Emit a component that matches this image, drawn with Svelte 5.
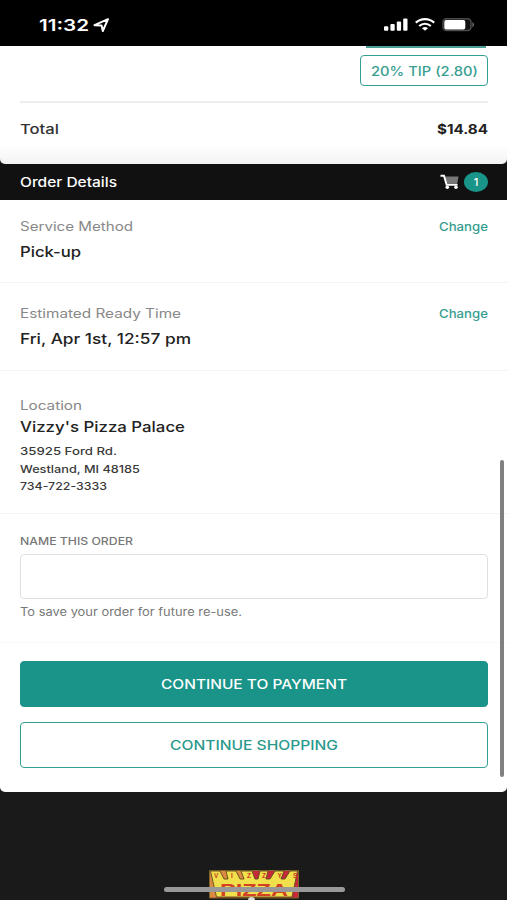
<script>
const order = {
	tip: "20% TIP (2.80)",
	total: "$14.84",
	count: 1
};

const details = [
	{ label: "Service Method", labelWidth: 113, value: "Pick-up", valueWidth: 61, kind: "service" },
	{ label: "Estimated Ready Time", labelWidth: 161, value: "Fri, Apr 1st, 12:57 pm", valueWidth: 171, kind: "ready" }
];

const address = [
	{ text: "35925 Ford Rd.", width: 97 },
	{ text: "Westland, MI 48185", width: 120 },
	{ text: "734-722-3333", width: 87 }
];

const logoLetters = [
	{ letter: "V", x: 5 },
	{ letter: "I", x: 22 },
	{ letter: "Z", x: 38 },
	{ letter: "Z", x: 53 },
	{ letter: "Y", x: 68.5 },
	{ letter: "S", x: 84 }
];

let orderName = $state("");
</script>

<!-- extended lettering: glyphs are stretched to the given width -->
{#snippet wide(text, width, kind, height = 20)}
	<svg class="wide {kind}" {width} {height}>
		<text x="0" y={height - 5} textLength={width} lengthAdjust="spacingAndGlyphs">{text}</text>
	</svg>
{/snippet}

<div class="phone">
	<header class="status">
		<div class="clock">
			{@render wide("11:32", 50, "time")}
			<svg width="17" height="15" viewBox="0 0 17 15">
				<path d="M1.5 7.2 15 1.2 9.8 13 8.6 7.6Z" fill="none" stroke="#fff" stroke-width="2" stroke-linejoin="round"/>
			</svg>
		</div>
		<div class="signals">
			<svg width="24" height="14" viewBox="0 0 24 14" fill="#fff">
				<rect x="0" y="8.3" width="4.3" height="4.5" rx="1"/>
				<rect x="6.4" y="6" width="4.3" height="6.8" rx="1"/>
				<rect x="12.8" y="3.4" width="4.3" height="9.4" rx="1"/>
				<rect x="19.2" y="0.4" width="4.3" height="12.4" rx="1"/>
			</svg>
			<svg width="20" height="14" viewBox="0 0 20 14" fill="none" stroke="#fff" stroke-width="2.2">
				<path d="M.8 4.7C6.2 0 13.8 0 19.200 4.700"/>
				<path d="M4.200 8C7.600 5 12.400 5 15.800 8"/>
				<path d="M7 10.200Q10 8 13 10.200L10 12.800Z" fill="#fff" stroke="none"/>
			</svg>
			<svg width="34" height="14" viewBox="0 0 34 14">
				<rect x="1" y="0.800" width="28" height="11.800" rx="3.500" fill="#111" stroke="#4a4a4a" stroke-width="1.500"/>
				<rect x="2.300" y="2" width="21" height="9.400" rx="2" fill="#fff"/>
				<path d="M30.300 4Q34 6.700 30.300 9.400Z" fill="#666"/>
			</svg>
		</div>
	</header>

	<section class="receipt">
		<div class="tip-stub"></div>
		<button class="tip">{@render wide(order.tip, 107, "tip-text")}</button>
		<div class="total">
			{@render wide("Total", 39, "body")}
			{@render wide(order.total, 51, "strong")}
		</div>
	</section>

	<div class="title">
		{@render wide("Order Details", 97, "heading")}
		<div class="cart">
			<svg width="20" height="16" viewBox="0 0 20 16">
				<path d="M4.500 2.500H18.500L17.200 9.500H6.200Z" fill="#777"/>
				<path d="M0.500 1.800H4L6.600 10.800H17.500" fill="none" stroke="#fff" stroke-width="1.900"/>
				<circle cx="7.300" cy="13.300" r="1.800" fill="#fff"/>
				<circle cx="16" cy="13.300" r="1.800" fill="#fff"/>
			</svg>
			<span class="badge">{order.count}</span>
		</div>
	</div>

	<main>
		{#each details as item}
			<section class="detail {item.kind}">
				<div class="row">
					{@render wide(item.label, item.labelWidth, "muted")}
					<a href="#change">{@render wide("Change", 49, "link")}</a>
				</div>
				{@render wide(item.value, item.valueWidth, "value")}
			</section>
		{/each}

		<section class="detail location">
			{@render wide("Location", 62, "muted")}
			{@render wide("Vizzy's Pizza Palace", 165, "value")}
			<div class="address">
				{#each address as line}
					{@render wide(line.text, line.width, "small", 17.5)}
				{/each}
			</div>
		</section>

		<section class="detail name">
			{@render wide("NAME THIS ORDER", 113, "caption")}
			<input aria-label="Name this order" bind:value={orderName}>
			{@render wide("To save your order for future re-use.", 222, "hint")}
		</section>

		<section class="actions">
			<button class="primary">{@render wide("CONTINUE TO PAYMENT", 186, "action")}</button>
			<button>{@render wide("CONTINUE SHOPPING", 168, "action")}</button>
		</section>
	</main>

	<footer>
		<svg class="logo" width="90" height="29" viewBox="0 0 90 29">
			<path d="M.5.5H89.5V28H.5Z" fill="#c5293a" stroke="#7c6328"/>
			<path d="M1 1H44L40 9H8V27.500H1Z" fill="#dc8a42"/>
			<path d="M1.500 1H11L15 9H19L17 1H27L31 9H35L32 1H43L46 9H49L51 1H59L57 9H61L66 1H75L72 9H76L81 1H88.500L83 27H7.500Z" fill="#f0e04c" stroke="#5c4a20" stroke-width=".9"/>
			{#each logoLetters as { letter, x }}
				<text class="small-name" {x} y="7.800">{letter}</text>
			{/each}
			<text class="big-name" x="11" y="25.500" textLength="68" lengthAdjust="spacingAndGlyphs">PIZZA</text>
		</svg>
		<div class="dot"></div>
		<div class="home"></div>
	</footer>
	<div class="scrollbar"></div>
</div>

<style>
	:global(body) {
		margin: 0;
		background: #1a1a1a;
	}

	.phone {
		position: relative;
		width: 507px;
		height: 900px;
		overflow: hidden;
		background: #1a1a1a;
		font-family: Inter, "Liberation Sans", sans-serif;
	}

	.phone * {
		box-sizing: border-box;
	}

	svg {
		display: block;
		flex: none;
	}

	.wide {
		overflow: visible;
		font-size: 13px;
		font-weight: 500;
		fill: #333;
	}

	.time {
		font-size: 16px;
		font-weight: 600;
		fill: #fff;
	}

	.tip-text {
		font-size: 12.5px;
		fill: #3a9f92;
	}

	.strong {
		font-size: 12.5px;
		font-weight: 700;
		fill: #222;
	}

	.heading {
		fill: #fff;
	}

	.muted {
		font-size: 12.5px;
		font-weight: 400;
		fill: #888;
	}

	.value {
		font-size: 14.5px;
		fill: #222;
	}

	.link {
		font-size: 12px;
		fill: #369d90;
	}

	.small {
		font-size: 11px;
		fill: #3a3a3a;
	}

	.caption {
		font-size: 10.2px;
		fill: #777;
	}

	.hint {
		font-size: 11.2px;
		font-weight: 400;
		fill: #777;
	}

	.action {
		fill: #2a998c;
	}

	.status {
		display: flex;
		justify-content: space-between;
		height: 46px;
		padding: 16px 31px 0 39px;
		background: #000;
	}

	.clock {
		display: flex;
		gap: 4px;
	}

	.clock svg:last-child {
		margin-top: 2px;
	}

	.signals {
		display: flex;
		gap: 7px;
		padding-top: 2px;
	}

	.receipt {
		display: flex;
		flex-direction: column;
		height: 118px;
		padding: 0 19px 0 20px;
		border-radius: 0 0 5px 5px;
		background: linear-gradient(#fff 100px, #f3f3f3);
	}

	.tip-stub {
		align-self: flex-end;
		width: 120px;
		height: 2px;
		margin-right: 2px;
		background: #4c9f94;
	}

	button {
		display: flex;
		align-items: center;
		justify-content: center;
		padding: 0;
		border: 1.5px solid #35a091;
		border-radius: 4px;
		background: #fff;
		font: inherit;
	}

	.tip {
		align-self: flex-end;
		width: 128px;
		height: 31px;
		margin-top: 7px;
	}

	.total {
		display: flex;
		justify-content: space-between;
		margin-top: 14.5px;
		padding-top: 16.5px;
		border-top: 2px solid #eee;
	}

	.title {
		display: flex;
		align-items: center;
		justify-content: space-between;
		height: 36px;
		padding: 0 19px 0 20px;
		background: #111;
	}

	.cart {
		display: flex;
		align-items: center;
		gap: 4px;
	}

	.badge {
		width: 24px;
		height: 20px;
		border-radius: 50%;
		background: #199489;
		color: #fff;
		font-size: 11px;
		font-weight: 500;
		line-height: 20px;
		text-align: center;
	}

	main {
		height: 592px;
		border-radius: 0 0 5px 5px;
		background: #fff;
	}

	.detail {
		padding: 0 19px 0 20px;
		border-bottom: 1px solid #f3f3f3;
	}

	.row {
		display: flex;
		justify-content: space-between;
		margin-bottom: 6px;
	}

	.service {
		height: 83px;
		padding-top: 15.5px;
	}

	.ready {
		height: 88px;
		padding-top: 20px;
	}

	.location {
		height: 143px;
		padding-top: 23.5px;
	}

	.location > .value {
		margin-top: 2.5px;
	}

	.address {
		margin-top: 5px;
	}

	.name {
		height: 129px;
		padding-top: 16px;
		border-bottom-color: #f8f8f8;
	}

	input {
		display: block;
		width: 100%;
		height: 45px;
		margin: 4px 0 2px;
		border: 1.5px solid #e0e0e0;
		border-radius: 4px;
		outline: none;
		font: inherit;
	}

	.actions {
		display: grid;
		gap: 15px;
		padding: 18px 19px 0 20px;
	}

	.actions button {
		height: 46px;
	}

	.actions .primary {
		border-color: #1a9488;
		background: #1a9488;
	}

	.primary .action {
		fill: #fff;
	}

	footer {
		position: relative;
		display: flex;
		justify-content: center;
		height: 108px;
		padding-top: 78px;
	}

	.small-name {
		font: bold 6.5px "Liberation Sans", sans-serif;
		fill: #cd3b27;
	}

	.big-name {
		font: bold 17px "Liberation Sans", sans-serif;
		fill: #d44225;
	}

	.home {
		position: absolute;
		left: 164px;
		bottom: 8px;
		width: 181px;
		height: 5px;
		border-radius: 3px;
		background: #999;
	}

	.dot {
		position: absolute;
		left: 248px;
		bottom: -4px;
		width: 7px;
		height: 7px;
		border-radius: 50%;
		background: #ddd;
	}

	.scrollbar {
		position: absolute;
		top: 460px;
		left: 500px;
		width: 4px;
		height: 317px;
		border-radius: 2px;
		background: #808080;
	}
</style>
